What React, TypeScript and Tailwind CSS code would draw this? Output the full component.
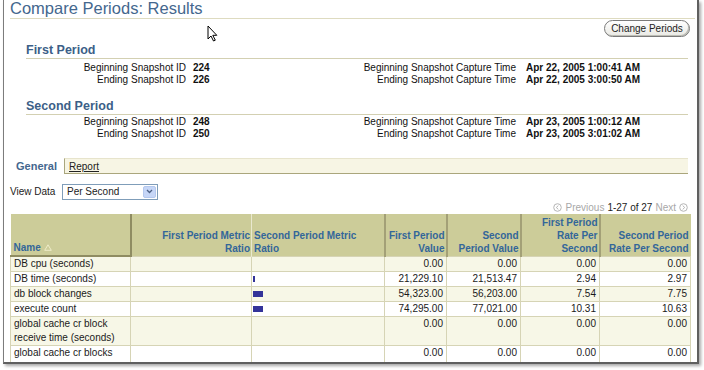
import React from "react";

const font = { fontFamily: '"Liberation Sans", Arial, sans-serif' };

function Cursor() {
  return (
    <svg className="absolute left-[207px] top-[25px]" width="12" height="17" viewBox="0 0 12 17">
      <path d="M1 1 L1 14 L4 11 L6.5 16 L8.3 15.2 L5.8 10.3 L9.8 10.3 Z" fill="#fff" stroke="#000" strokeWidth="1" strokeLinejoin="miter" />
    </svg>
  );
}

function NavIcon({ dir }: { dir: "l" | "r" }) {
  return (
    <svg width="9" height="9" viewBox="0 0 9 9" className="inline-block">
      <circle cx="4.5" cy="4.5" r="3.8" fill="none" stroke="#b5b5b5" strokeWidth="1" />
      {dir === "l" ? (
        <path d="M5.3 2.6 L3.3 4.5 L5.3 6.4" fill="none" stroke="#b5b5b5" strokeWidth="1" />
      ) : (
        <path d="M3.7 2.6 L5.7 4.5 L3.7 6.4" fill="none" stroke="#b5b5b5" strokeWidth="1" />
      )}
    </svg>
  );
}

type Row = {
  name: React.ReactNode;
  bar: number;
  v: string[];
  tall?: boolean;
};

const rows: Row[] = [
  { name: "DB cpu (seconds)", bar: 0, v: ["0.00", "0.00", "0.00", "0.00"] },
  { name: "DB time (seconds)", bar: 2, v: ["21,229.10", "21,513.47", "2.94", "2.97"] },
  { name: "db block changes", bar: 10, v: ["54,323.00", "56,203.00", "7.54", "7.75"] },
  { name: "execute count", bar: 10, v: ["74,295.00", "77,021.00", "10.31", "10.63"] },
  { name: "global cache cr block receive time (seconds)", bar: 0, v: ["0.00", "0.00", "0.00", "0.00"], tall: true },
  { name: "global cache cr blocks required", bar: 0, v: ["0.00", "0.00", "0.00", "0.00"], tall: true },
];

function DetailRow({ l1, v1, l2, v2 }: { l1: string; v1: string; l2: string; v2: string }) {
  return (
    <div className="flex h-[12px] items-center text-[10px] leading-[12px] text-[#111]">
      <div className="w-[160px] text-right">{l1}</div>
      <div className="w-[60px] pl-[7px] font-bold">{v1}</div>
      <div className="w-[270px] text-right">{l2}</div>
      <div className="pl-[10px] font-bold">{v2}</div>
    </div>
  );
}

export default function App() {
  return (
    <div className="relative h-[370px] w-[704px] overflow-hidden bg-white" style={font}>
      <div className="ml-[3px] h-[364px] w-[696px] overflow-hidden border-l border-r-2 border-b-2 border-l-[#7c7c7c] border-r-[#5f5f5f] border-b-[#5f5f5f] shadow-[2px_2px_3px_rgba(0,0,0,0.35)]">
        {/* Title */}
        <div className="ml-[6px] mr-[2px] h-[19px] border-b border-[#dedbc0]">
          <div className="text-[16.5px] leading-[17px] text-[#44678e]">Compare Periods: Results</div>
        </div>

        {/* Button */}
        <div className="mt-[1px] flex justify-end pr-[7px]">
          <div className="flex h-[17px] w-[86px] items-center justify-center rounded-full border border-[#7a7a7a] bg-gradient-to-b from-white to-[#e9e9e4] text-[10px] text-[#222] shadow-[inset_-1px_-1px_0_#bdbdb5]">
            Change Periods
          </div>
        </div>

        {/* First Period */}
        <div className="ml-[22px] mr-[9px] mt-[5px] h-[17px] border-b border-[#d3d0b2]">
          <div className="text-[12.5px] font-bold leading-[16px] text-[#3c5f88]">First Period</div>
        </div>
        <div className="ml-[22px] mt-[3px]">
          <DetailRow l1="Beginning Snapshot ID" v1="224" l2="Beginning Snapshot Capture Time" v2="Apr 22, 2005 1:00:41 AM" />
          <DetailRow l1="Ending Snapshot ID" v1="226" l2="Ending Snapshot Capture Time" v2="Apr 22, 2005 3:00:50 AM" />
        </div>

        {/* Second Period */}
        <div className="ml-[22px] mr-[9px] mt-[12px] h-[17px] border-b border-[#d3d0b2]">
          <div className="text-[12.5px] font-bold leading-[16px] text-[#3c5f88]">Second Period</div>
        </div>
        <div className="ml-[22px] mt-[1px]">
          <DetailRow l1="Beginning Snapshot ID" v1="248" l2="Beginning Snapshot Capture Time" v2="Apr 23, 2005 1:00:12 AM" />
          <DetailRow l1="Ending Snapshot ID" v1="250" l2="Ending Snapshot Capture Time" v2="Apr 23, 2005 3:01:02 AM" />
        </div>

        {/* Tabs */}
        <div className="ml-[6px] mr-[9px] mt-[18px] flex h-[16px]">
          <div className="flex w-[54px] items-center pl-[6px] text-[11px] font-bold text-[#44678e]">General</div>
          <div className="flex flex-1 items-center border-l border-t border-b border-l-[#a9a67e] border-t-[#e7e4cc] border-b-[#aaa67c] bg-[#f7f5e4] pl-[4px] text-[10px] text-[#222]">
            <span className="underline">Report</span>
          </div>
        </div>

        {/* View data */}
        <div className="ml-[6px] mt-[9px] flex h-[17px] items-center text-[10px] text-[#222]">
          <span className="w-[52px]">View Data</span>
          <div className="flex h-[16px] w-[96px] items-center border border-[#7f9db9] bg-white">
            <span className="flex-1 pl-[4px]">Per Second</span>
            <div className="mr-[1px] flex h-[12px] w-[13px] items-center justify-center rounded-[2px] border border-[#b4c8ee] bg-[#c6d6f7]">
              <svg width="7" height="5" viewBox="0 0 7 5">
                <path d="M1 1 L3.5 3.5 L6 1" fill="none" stroke="#4d6185" strokeWidth="1.3" />
              </svg>
            </div>
          </div>
        </div>

        {/* Pagination */}
        <div className="mr-[9px] mt-[1px] flex h-[12px] items-center justify-end gap-[3px] text-[10px]">
          <NavIcon dir="l" />
          <span className="text-[#a8a8a8]">Previous</span>
          <span className="text-[#222]">1-27 of 27</span>
          <span className="text-[#a8a8a8]">Next</span>
          <NavIcon dir="r" />
        </div>

        {/* Table */}
        <div className="ml-[6px] mt-[1px] w-[680px]">
          <table className="w-[680px] table-fixed border-collapse text-[10px]">
            <colgroup>
              <col className="w-[120px]" />
              <col className="w-[121px]" />
              <col className="w-[133px]" />
              <col className="w-[62px]" />
              <col className="w-[74px]" />
              <col className="w-[79px]" />
              <col className="w-[91px]" />
            </colgroup>
            <thead>
              <tr className="h-[42px] bg-[#cccc99] align-bottom font-bold leading-[13px] text-[#336699]">
                <th className="border-r-2 border-b-2 border-r-[#8f8c62] border-b-[#8f8c62] px-[3px] pb-[1px] text-left font-bold">
                  <span className="inline-flex items-center gap-[3px]">
                    Name
                    <svg width="8" height="7" viewBox="0 0 8 7">
                      <path d="M4 0.8 L7.3 6.3 L0.7 6.3 Z" fill="none" stroke="#eeecc8" strokeWidth="1" />
                    </svg>
                  </span>
                </th>
                <th className="border-r border-r-[#e9e8cf] px-[1px] pb-[1px] text-right font-bold">
                  First Period Metric
                  <br />
                  Ratio
                </th>
                <th className="border-r-2 border-r-[#a3a077] px-[2px] pb-[1px] text-left font-bold">
                  Second Period Metric
                  <br />
                  Ratio
                </th>
                <th className="border-r-2 border-r-[#a3a077] px-[1px] pb-[1px] text-right font-bold">
                  First Period
                  <br />
                  Value
                </th>
                <th className="border-r-2 border-r-[#a3a077] px-[1px] pb-[1px] text-right font-bold">
                  Second
                  <br />
                  Period Value
                </th>
                <th className="border-r-2 border-r-[#a3a077] px-[1px] pb-[1px] text-right font-bold">
                  First Period
                  <br />
                  Rate Per
                  <br />
                  Second
                </th>
                <th className="px-[2px] pb-[1px] text-right font-bold">
                  Second Period
                  <br />
                  Rate Per Second
                </th>
              </tr>
            </thead>
            <tbody className="text-[#1a1a1a]">
              {rows.map((r, i) => (
                <tr key={i} className={`${i % 2 === 0 ? "bg-[#f7f7e7]" : "bg-white"} ${r.tall ? "h-[29px]" : "h-[15px]"} align-top leading-[14px]`}>
                  <td className="border border-[#d6d4b5] px-[3px]">{r.name}</td>
                  <td className="border border-[#d6d4b5]"></td>
                  <td className="border border-[#d6d4b5] pl-[1px]">
                    {r.bar > 0 && <div className="mt-[4px] h-[6px] bg-[#333399]" style={{ width: r.bar }} />}
                  </td>
                  {r.v.map((v, j) => (
                    <td key={j} className="border border-[#d6d4b5] pr-[3px] text-right">
                      {v}
                    </td>
                  ))}
                </tr>
              ))}
            </tbody>
          </table>
        </div>
      </div>
      <Cursor />
    </div>
  );
}
